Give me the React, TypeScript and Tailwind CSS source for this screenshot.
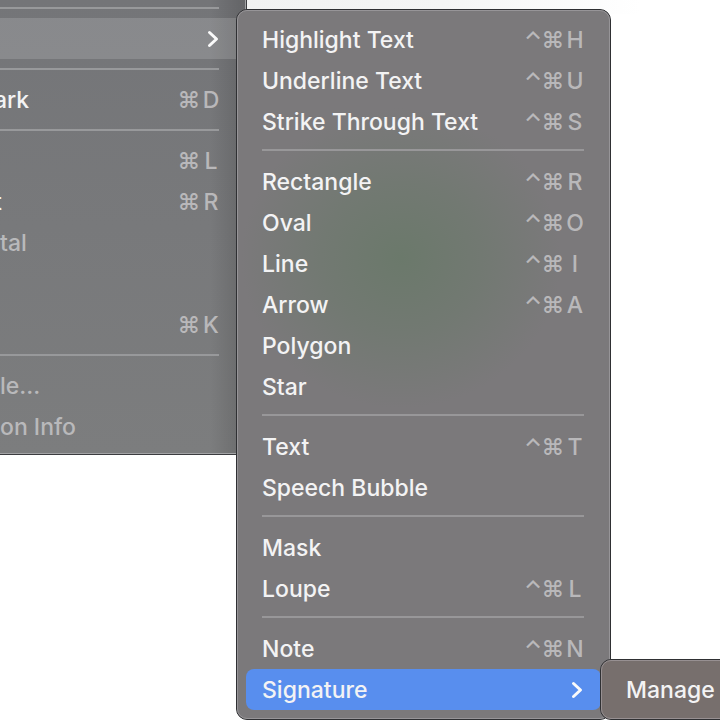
type Item = {
  label?: string;
  keys?: string;
  disabled?: boolean;
  active?: boolean;
  cut?: boolean;
};

const viewGroups: Item[][] = [
  [{ active: true }],
  [{ label: "ark", keys: "⌘D", cut: true }],
  [
    { keys: "⌘L" },
    { label: "t", keys: "⌘R", cut: true },
    { label: "tal", disabled: true },
    {},
    { keys: "⌘K" },
  ],
  [
    { label: "le...", disabled: true },
    { label: "on Info", disabled: true },
  ],
];

const annotateGroups: Item[][] = [
  [
    { label: "Highlight Text", keys: "⌃⌘H" },
    { label: "Underline Text", keys: "⌃⌘U" },
    { label: "Strike Through Text", keys: "⌃⌘S" },
  ],
  [
    { label: "Rectangle", keys: "⌃⌘R" },
    { label: "Oval", keys: "⌃⌘O" },
    { label: "Line", keys: "⌃⌘I" },
    { label: "Arrow", keys: "⌃⌘A" },
    { label: "Polygon" },
    { label: "Star" },
  ],
  [{ label: "Text", keys: "⌃⌘T" }, { label: "Speech Bubble" }],
  [{ label: "Mask" }, { label: "Loupe", keys: "⌃⌘L" }],
  [{ label: "Note", keys: "⌃⌘N" }, { label: "Signature", active: true }],
];

function Shortcut({ keys }: { keys: string }) {
  return (
    <kbd className="flex items-center font-[Inter,sans-serif] text-[#b9b8ba]">
      {[...keys].map((key) => (
        <span key={key} className="flex w-5 justify-center last:ml-1 last:w-4">
          {key}
        </span>
      ))}
    </kbd>
  );
}

function Chevron() {
  return (
    <svg
      viewBox="0 0 12 18"
      className="h-[18px] w-3"
      fill="none"
      stroke="#fafafa"
      strokeWidth="3"
      strokeLinecap="round"
      strokeLinejoin="round"
      aria-hidden="true"
    >
      <path d="M2.5 2.5 9.5 9l-7 6.5" />
    </svg>
  );
}

function ParentItem({ item }: { item: Item }) {
  return (
    <li>
      <button
        type="button"
        disabled={item.disabled}
        className={`flex h-[41px] w-full items-center justify-between pr-[26px] text-left text-[#f3f3f4] disabled:text-[#b9b9bb] ${
          item.active ? "bg-white/15" : ""
        }`}
      >
        <span className={item.cut ? "-ml-1.5" : ""}>{item.label}</span>
        {item.keys && <Shortcut keys={item.keys} />}
        {item.active && <Chevron />}
      </button>
    </li>
  );
}

function SubItem({ item }: { item: Item }) {
  return (
    <li>
      <button
        type="button"
        className={`flex h-[41px] w-full items-center justify-between rounded-lg pl-4 pr-[18px] text-left text-[#f3f3f4] ${
          item.active ? "bg-[#588eee]" : ""
        }`}
      >
        <span>{item.label}</span>
        {item.keys && <Shortcut keys={item.keys} />}
        {item.active && <Chevron />}
      </button>
    </li>
  );
}

export default function App() {
  return (
    <div className="relative min-h-screen overflow-hidden bg-white font-[Inter,sans-serif] text-[23px] font-medium leading-7">
      <div className="flex items-start">
        <nav
          aria-label="Tools"
          className="flow-root w-[247px] shrink-0 border-b border-r border-[#3b3c3f] bg-[linear-gradient(to_right,transparent_210px,#00000020_240px),linear-gradient(to_bottom,#747578,#7c7d7e)]"
        >
          <ul className="-mt-0.5 flow-root border-b border-r border-[#a2a3a5] pb-1.5">
            {viewGroups.map((group, index) => (
              <li key={index} className="flow-root">
                <hr className="mb-[9px] mr-[26px] mt-[9px] h-0.5 border-0 bg-[#98999b]" />
                <ul>
                  {group.map((item, row) => (
                    <ParentItem key={row} item={item} />
                  ))}
                </ul>
              </li>
            ))}
          </ul>
        </nav>
        {/* toolbar edge of the window behind the menus */}
        <div className="mr-20 h-3.5 grow bg-linear-to-r from-[#f1f2f2] via-[#f4f5f5] to-white" />
      </div>

      <nav
        aria-label="Annotate"
        className="absolute left-[236px] top-[9px] w-[375px] rounded-[11px] border border-[#2f3033] bg-[#7b797b] bg-radial-[ellipse_160px_150px_at_44%_35%] from-[#6b796b] via-[#727972] to-[#7b797b]"
      >
        <ul className="rounded-[10px] border border-[#979598] px-2 py-2">
          {annotateGroups.map((group, index) => (
            <li key={index}>
              {index > 0 && (
                <hr className="mb-2.5 ml-4 mr-[17px] mt-[7px] h-0.5 border-0 bg-[#989799]" />
              )}
              <ul>
                {group.map((item) => (
                  <SubItem key={item.label} item={item} />
                ))}
              </ul>
            </li>
          ))}
        </ul>
      </nav>

      <nav
        aria-label="Signature"
        className="absolute -right-10 left-[600px] top-[659px] rounded-[11px] border border-[#2f3033] bg-[#776f6d]"
      >
        <div className="rounded-[10px] border border-[#979092] py-2">
          <button
            type="button"
            className="flex h-[41px] items-center whitespace-nowrap px-6 text-[#f3f3f4]"
          >
            Manage
          </button>
        </div>
      </nav>
    </div>
  );
}
